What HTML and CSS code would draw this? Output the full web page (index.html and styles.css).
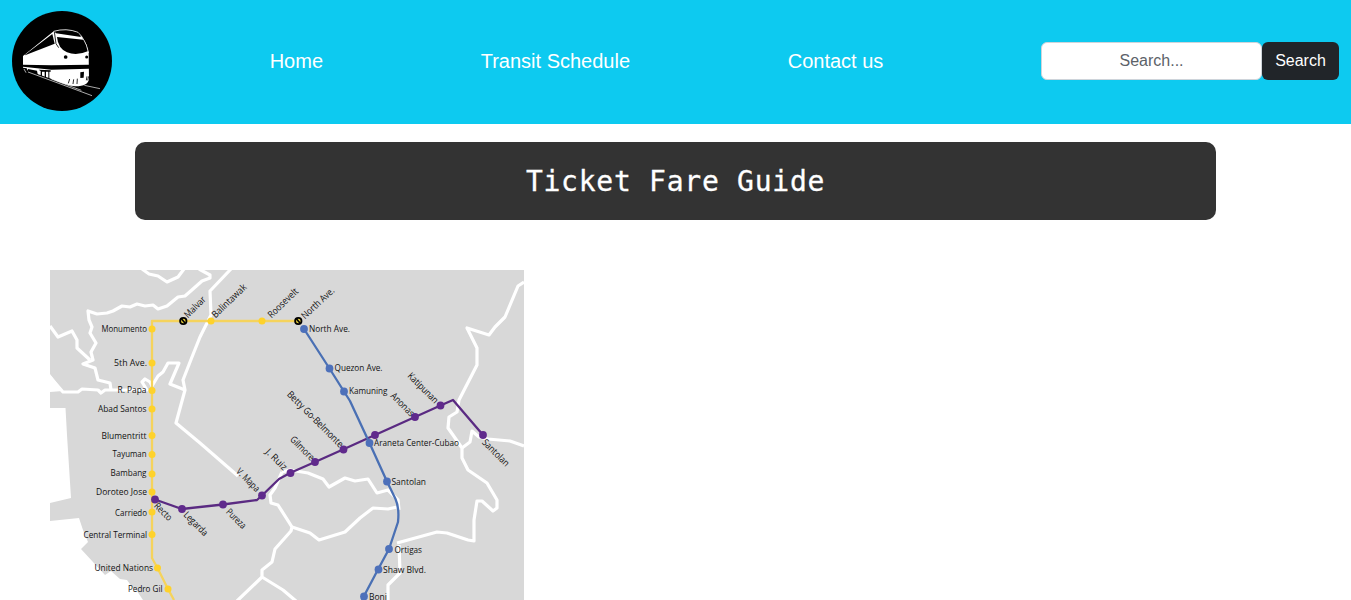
FILE: index.html
```
<!DOCTYPE html>
<html lang="en">
<head>
<meta charset="utf-8">
<title>Ticket Fare Guide</title>
<link rel="stylesheet" href="styles.css">
</head>
<body>
<nav class="navbar">
  <a class="logo" href="#" aria-label="Home page">
    <svg viewBox="12 11 100 100" width="100" height="100">
      <circle cx="62" cy="61" r="50" fill="#000"/>
      <g transform="translate(18 25) scale(.33333)">
        <path d="M15 93 L107 19 L113 20 L190 34 L205 58 L212 85 L213 160 Q212 184 172 184 Q150 184 95 160 L15 132Z" fill="#fff"/>
        <path d="M21 89 L103 27 L110 56 L21 91Z" fill="#000"/>
        <path d="M107 19 Q145 8 180 22 Q202 42 212 84" fill="none" stroke="#fff" stroke-width="2.500"/>
        <path d="M110 20 Q150 14 180 24 L189 36 L114 25Z" fill="#000"/>
        <path d="M109 20 L114 56 L122 68" fill="none" stroke="#000" stroke-width="2.500"/>
        <path d="M117 36 L196 44 Q206 60 209 79 Q175 94 147 82 Q120 70 117 36Z" fill="#000"/>
        <path d="M15 119 L100 121 L213 119 V131 L100 134 L15 125Z" fill="#000"/>
        <circle cx="143" cy="96" r="5.500" fill="#000"/><circle cx="206" cy="96" r="4.500" fill="#000"/>
        <path d="M15 128 L26 130 L30 139 L15 135Z M30 132 L57 137 L60 152 L30 141Z M62 134 L98 136 V140 H94 V162 L91 161 V140 H84 V159 L80 158 V140 H72 V155 L68 154 V138Z" fill="#000"/>
        <path d="M187 142 L198 140 L197 158 L187 159Z" fill="#000"/>
        <path d="M155 162 L151 175 M167 163 L165 177 M178 161 L177 177 M207 154 L205 166 M212 154 L209 166" fill="none" stroke="#000" stroke-width="2.500"/>
        <path d="M18 132 L24 143 M30 141 L222 212 M100 162 L190 196 M199 181 L246 191" stroke="#fff" stroke-width="2" fill="none"/>
      </g>
    </svg>
  </a>
  <a class="nav-link" href="#">Home</a>
  <a class="nav-link" href="#">Transit Schedule</a>
  <a class="nav-link" href="#">Contact us</a>
  <form class="search">
    <input class="search-input" type="text" placeholder="Search...">
    <button class="search-button" type="button">Search</button>
  </form>
</nav>
<main>
  <h1 class="title">Ticket Fare Guide</h1>
  <svg class="map" viewBox="50 270 474 330" width="474" height="330">
    <rect x="50" y="270" width="474" height="330" fill="#d8d8d8"/>
    <g fill="#fff">
      <path d="M50 374 L63 391 L50 392Z"/>
      <path d="M50 408 L65.500 408 L67 435 L71 498 L50 503Z"/>
      <path d="M50 521 L79 518 L83 530 L88 542 L81 549 L105 575 L111 571 L120 579 L127 580 L132 587 L137 591 L143 600 L50 600Z"/>
    </g>
    <g class="road">
      <path d="M142 269 L149 274 L158 276 L167 282 L178 277 L184 269"/>
      <path d="M199 269 L210 275 L210 278 L202 281 L193 289 L185 296 L178 297 L167 306 L158 309 L153 305 L145 306 L137 304 L130 307 L122 306 L113 311 L107 313 L97 314 L88 311 L89 320 L92 327 L90 333 L96 343 L91 352 L93 360 L83 364 L95 368 L98 380 L110 383 L111 390"/>
      <path d="M50 326 L58 337 L72 331 L77 340 L77 348 L90 360"/>
      <path d="M50 377 L63 392 L78 392 L82 389 L98 390 L101 393 L105 390 L147 390 L142 382 L145 379 L150 382 L152 386 L158 376 L163 372 L168 363 L179 363 L170 384 L185 390"/>
      <path d="M231 269 L210 291 L211 315 L200 337 L192 357 L183 380 L185 390 L176 423 L200 443 L238 476"/>
      <path d="M282 472 L275 488 L270 495 L271 503 L278 505 L292 527 L291 531 L275 549 L272 562 L262 570 L262 577 L237 601 M262 577 L283 590 L296 601"/>
      <path d="M292 527 L310 533 L319 540 L345 532 L360 518 L373 508 L388 509 L397 507"/>
      <path d="M282 472 L290 470 L308 473 L323 479 L329 487 L345 478 L355 481 L368 479 L377 493 L388 490 L398 500 L399 510"/>
      <path d="M524 282 L518 286 L505 317 L495 327 L489 335 L467 328 L477 348 L477 365 L459 400 L457 412 L449 417 L448 428 L453 435 L462 448 L462 458 L468 470 L487 483 L497 500 L497 508 L493 511 L482 501 L477 501 L474 520 L474 541 L468 540 L447 533 L437 532 L397 543"/>
      <path d="M462 448 L470 442 L472 431 L479 437 L488 439 L510 441 L524 446"/>
      <path d="M399 545 L400 573 L388 585 L388 601"/>
    </g>
    <g class="line yellow">
      <path d="M298 321 H152 V558 L157.500 568 L168 589 L174 600"/>
      <circle cx="152" cy="329" r="3.500"/><circle cx="152" cy="363" r="3.500"/><circle cx="152" cy="390.500" r="3.500"/><circle cx="152" cy="409" r="3.500"/><circle cx="152" cy="435.500" r="3.500"/><circle cx="152" cy="454.500" r="3.500"/><circle cx="152" cy="474" r="3.500"/><circle cx="152" cy="492" r="3.500"/><circle cx="152" cy="512" r="3.500"/><circle cx="152" cy="534.500" r="3.500"/><circle cx="157.500" cy="568" r="3.500"/><circle cx="168" cy="589" r="3.500"/><circle cx="211" cy="321" r="3.500"/><circle cx="262" cy="321" r="3.500"/>
    </g>
    <g class="line purple">
      <path d="M155 499.500 L182 509 L223 504.500 L257 500 L262 495.500 L279 479 L290 473 L315 462 L343 449.500 L375 435 L415 417 L440.500 405.500 L453 400 L483 435"/>
      <circle cx="155" cy="499.500" r="3.900"/><circle cx="182" cy="509" r="3.900"/><circle cx="223" cy="504.500" r="3.900"/><circle cx="262" cy="495.500" r="3.900"/><circle cx="290.500" cy="473" r="3.900"/><circle cx="315" cy="462" r="3.900"/><circle cx="343.500" cy="449.500" r="3.900"/><circle cx="375" cy="435" r="3.900"/><circle cx="415" cy="417" r="3.900"/><circle cx="440.500" cy="405.500" r="3.900"/><circle cx="483" cy="435" r="3.900"/>
    </g>
    <g class="line blue">
      <path d="M304 329 L329.500 368.500 L344 391.500 L350 401 L369.500 443 L387 481.500 L395.500 499 Q399.500 508 398 522 L389 549 L378 569.500 L364 596 L362 600"/>
      <circle cx="304" cy="329" r="3.900"/><circle cx="329.500" cy="368.500" r="3.900"/><circle cx="344" cy="391.500" r="3.900"/><circle cx="369.500" cy="443" r="3.900"/><circle cx="387" cy="481.500" r="3.900"/><circle cx="389" cy="549" r="3.900"/><circle cx="378.500" cy="569.500" r="3.900"/><circle cx="364" cy="596.500" r="3.900"/>
    </g>
    <g fill="#ead13b" stroke="#000" stroke-width="1.800">
      <circle cx="183.300" cy="321" r="3.200"/><circle cx="298.300" cy="321" r="3.200"/>
      <path d="M181.500 319 L185 323 M296.500 319 L300 323"/>
    </g>
    <g class="labels">
      <text x="101.500" y="332" textLength="45.500" lengthAdjust="spacingAndGlyphs">Monumento</text>
      <text x="114" y="366" textLength="33" lengthAdjust="spacingAndGlyphs">5th Ave.</text>
      <text x="117.500" y="393" textLength="29" lengthAdjust="spacingAndGlyphs">R. Papa</text>
      <text x="98" y="412" textLength="48.500" lengthAdjust="spacingAndGlyphs">Abad Santos</text>
      <text x="101.500" y="439" textLength="45" lengthAdjust="spacingAndGlyphs">Blumentritt</text>
      <text x="112.500" y="457" textLength="34" lengthAdjust="spacingAndGlyphs">Tayuman</text>
      <text x="110.500" y="476" textLength="36" lengthAdjust="spacingAndGlyphs">Bambang</text>
      <text x="96" y="495" textLength="51" lengthAdjust="spacingAndGlyphs">Doroteo Jose</text>
      <text x="115" y="515.500" textLength="32" lengthAdjust="spacingAndGlyphs">Carriedo</text>
      <text x="83.500" y="537.500" textLength="63.500" lengthAdjust="spacingAndGlyphs">Central Terminal</text>
      <text x="94.500" y="571" textLength="58.500" lengthAdjust="spacingAndGlyphs">United Nations</text>
      <text x="128" y="592" textLength="34.500" lengthAdjust="spacingAndGlyphs">Pedro Gil</text>
      <text x="309" y="332" textLength="41" lengthAdjust="spacingAndGlyphs">North Ave.</text>
      <text x="334.500" y="371" textLength="48" lengthAdjust="spacingAndGlyphs">Quezon Ave.</text>
      <text x="349" y="393.500" textLength="38.500" lengthAdjust="spacingAndGlyphs">Kamuning</text>
      <text x="374" y="446" textLength="85" lengthAdjust="spacingAndGlyphs">Araneta Center-Cubao</text>
      <text x="391.500" y="484.500" textLength="34.500" lengthAdjust="spacingAndGlyphs">Santolan</text>
      <text x="394.500" y="552.500" textLength="27.500" lengthAdjust="spacingAndGlyphs">Ortigas</text>
      <text x="383" y="573" textLength="43" lengthAdjust="spacingAndGlyphs">Shaw Blvd.</text>
      <text x="369" y="599.500" textLength="18" lengthAdjust="spacingAndGlyphs">Boni</text>
      <text transform="translate(188 318.500) rotate(-45)" textLength="26" lengthAdjust="spacingAndGlyphs">Malvar</text>
      <text transform="translate(215.500 318.500) rotate(-44)" textLength="44" lengthAdjust="spacingAndGlyphs">Balintawak</text>
      <text transform="translate(271.500 318.500) rotate(-44)" textLength="38" lengthAdjust="spacingAndGlyphs">Roosevelt</text>
      <text transform="translate(305 319.500) rotate(-43)" textLength="41" lengthAdjust="spacingAndGlyphs">North Ave.</text>
      <text transform="translate(286.500 395) rotate(45)" textLength="75" lengthAdjust="spacingAndGlyphs">Betty Go-Belmonte</text>
      <text transform="translate(407 376.500) rotate(45)" textLength="39" lengthAdjust="spacingAndGlyphs">Katipunan</text>
      <text transform="translate(390 396.500) rotate(45)" textLength="29" lengthAdjust="spacingAndGlyphs">Anonas</text>
      <text transform="translate(265 452.500) rotate(45)" textLength="26" lengthAdjust="spacingAndGlyphs">J. Ruiz</text>
      <text transform="translate(289.500 440) rotate(45)" textLength="30" lengthAdjust="spacingAndGlyphs">Gilmore</text>
      <text transform="translate(235.500 472) rotate(45)" textLength="29" lengthAdjust="spacingAndGlyphs">V. Mapa</text>
      <text transform="translate(225.500 512.500) rotate(45)" textLength="24" lengthAdjust="spacingAndGlyphs">Pureza</text>
      <text transform="translate(153.500 506.500) rotate(45)" textLength="21" lengthAdjust="spacingAndGlyphs">Recto</text>
      <text transform="translate(183 515.500) rotate(45)" textLength="30" lengthAdjust="spacingAndGlyphs">Legarda</text>
      <text transform="translate(481.500 443) rotate(45)" textLength="34" lengthAdjust="spacingAndGlyphs">Santolan</text>
    </g>
  </svg>
</main>
</body>
</html>
```
FILE: styles.css
```
* { box-sizing: border-box; }
body {
  margin: 0;
  background: #fff;
  font-family: "Liberation Sans", Arial, sans-serif;
  font-size: 16px;
  line-height: 24px;
}
.navbar {
  display: flex;
  align-items: center;
  justify-content: space-between;
  height: 124px;
  padding: 11px 12px 13px;
  background: #0dcaf0;
}
.logo { display: block; width: 100px; height: 100px; }
.logo svg { display: block; }
.nav-link {
  color: #fff;
  font-size: 20px;
  line-height: 30px;
  text-decoration: none;
}
.search { display: flex; }
.search-input {
  width: 221px;
  height: 38px;
  padding: 6px 12px;
  border: 1px solid #ced4da;
  border-radius: 6px;
  background: #fff;
  font: inherit;
  text-align: center;
  appearance: none;
}
.search-input::placeholder { color: #5c6269; opacity: 1; }
.search-button {
  width: 77px;
  height: 38px;
  padding: 0;
  border: 0;
  border-radius: 6px;
  background: #212529;
  color: #fff;
  font: inherit;
}
.title {
  width: 1081px;
  height: 78px;
  margin: 18px auto 50px;
  padding-top: 1px;
  border-radius: 10px;
  background: #333;
  color: #fff;
  font: 400 28px/78px "DejaVu Sans Mono", monospace;
  letter-spacing: 0.74px;
  text-align: center;
  -webkit-text-stroke: 0.3px #fff;
}
.map { display: block; margin-left: 50px; }
.road path {
  fill: none;
  stroke: #fff;
  stroke-width: 3.2;
  stroke-linejoin: round;
}
.line path { fill: none; stroke-width: 2.3; stroke-linejoin: round; }
.yellow path { stroke: #f5d35c; }
.yellow circle { fill: #fed22b; }
.purple path { stroke: #5a2a82; }
.purple circle { fill: #602a8c; }
.blue path { stroke: #4a70b4; }
.blue circle { fill: #4d70ba; }
.labels text {
  fill: #111;
  font-family: "Open Sans", "Noto Sans", sans-serif;
  font-size: 9.6px;
}
```
